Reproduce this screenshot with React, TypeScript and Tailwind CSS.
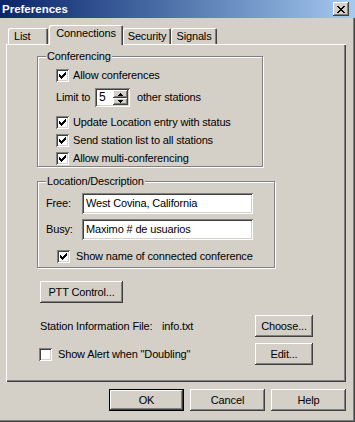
import React from 'react';

const raised =
  'shadow-[inset_-1px_-1px_#404040,inset_1px_1px_#ffffff,inset_-2px_-2px_#808080,inset_2px_2px_#d4d0c8]';
const sunken =
  'shadow-[inset_1px_1px_#808080,inset_-1px_-1px_#ffffff,inset_2px_2px_#404040,inset_-2px_-2px_#d4d0c8]';

function CheckBox({ checked }: { checked?: boolean }) {
  return (
    <span className={`w-[13px] h-[13px] shrink-0 bg-white flex items-center justify-center ${sunken}`}>
      {checked && (
        <svg width="7" height="7" viewBox="0 0 7 7" shapeRendering="crispEdges">
          <path
            fill="#000"
            d="M0 2h1v3h-1zM1 3h1v3h-1zM2 4h1v3h-1zM3 3h1v3h-1zM4 2h1v3h-1zM5 1h1v3h-1zM6 0h1v3h-1z"
          />
        </svg>
      )}
    </span>
  );
}

function Check({ label, checked, gap = 'gap-[4px]' }: { label: string; checked?: boolean; gap?: string }) {
  return (
    <div className={`h-[13px] flex items-center ${gap}`}>
      <CheckBox checked={checked} />
      <span className="whitespace-nowrap">{label}</span>
    </div>
  );
}

function Button({ label, width, isDefault }: { label: string; width: string; isDefault?: boolean }) {
  return (
    <div
      className={`${width} h-[22px] flex items-center justify-center bg-[#d4d0c8] ${raised} ${
        isDefault ? 'border border-black' : ''
      }`}
    >
      {label}
    </div>
  );
}

function Tab({ label, width, selected, left }: { label: string; width: string; selected?: boolean; left?: boolean }) {
  return (
    <div
      className={`${width} flex items-center ${left ? 'justify-start pl-[6px]' : 'justify-center'} bg-[#d4d0c8] rounded-t-[2px] shadow-[inset_1px_1px_#ffffff,inset_-1px_0_#404040,inset_-2px_0_#808080] ${
        selected ? 'h-[20px] -mb-px relative z-10 pb-[3px]' : 'h-[16px]'
      }`}
    >
      {label}
    </div>
  );
}

function GroupBox({ title, className, children }: { title: string; className: string; children: React.ReactNode }) {
  return (
    <div
      className={`relative ml-[31px] border border-[#808080] shadow-[inset_1px_1px_#ffffff,1px_1px_#ffffff] flex flex-col ${className}`}
    >
      <span className="absolute left-[8px] top-[-7px] px-[1px] bg-[#d4d0c8] leading-[13px]">{title}</span>
      {children}
    </div>
  );
}

function TextField({ value }: { value: string }) {
  return (
    <div className={`w-[171px] h-[21px] bg-white flex items-center pl-[4px] ${sunken}`}>{value}</div>
  );
}

function SpinBox({ value }: { value: string }) {
  return (
    <div className={`w-[35px] h-[19px] bg-white flex p-[2px] ${sunken}`}>
      <span className="flex-1 pl-[2px] text-[12px] leading-[15px]">{value}</span>
      <div className="w-[15px] flex flex-col">
        <div className={`h-[8px] flex items-center justify-center bg-[#d4d0c8] ${raised}`}>
          <svg width="5" height="3" viewBox="0 0 5 3" shapeRendering="crispEdges">
            <path fill="#000" d="M2 0h1v1h-1zM1 1h3v1h-3zM0 2h5v1h-5z" />
          </svg>
        </div>
        <div className={`h-[7px] flex items-center justify-center bg-[#d4d0c8] ${raised}`}>
          <svg width="5" height="3" viewBox="0 0 5 3" shapeRendering="crispEdges">
            <path fill="#000" d="M0 0h5v1h-5zM1 1h3v1h-3zM2 2h1v1h-1z" />
          </svg>
        </div>
      </div>
    </div>
  );
}

export default function App() {
  return (
    <div className="w-[355px] h-[422px] bg-[#d4d0c8] flex flex-col overflow-hidden font-['Liberation_Sans',Arial,sans-serif] text-[11px] leading-[13px] tracking-[-0.15px] text-black shadow-[inset_-1px_-1px_#404040,inset_-2px_-2px_#808080]">
      {/* Title bar */}
      <div className="h-[18px] shrink-0 flex items-center justify-between pl-[2px] pr-[6px] bg-linear-to-r from-[#0a246a] to-[#a6caf0]">
        <span className="text-white font-bold text-[11.5px] tracking-normal">Preferences</span>
        <div className={`w-[16px] h-[14px] flex items-center justify-center bg-[#d4d0c8] ${raised}`}>
          <svg width="8" height="7" viewBox="0 0 8 7" shapeRendering="crispEdges">
            <path
              fill="#000"
              d="M0 0h2v1h-2zM6 0h2v1h-2zM1 1h2v1h-2zM5 1h2v1h-2zM2 2h4v1h-4zM3 3h2v1h-2zM2 4h4v1h-4zM1 5h2v1h-2zM5 5h2v1h-2zM0 6h2v1h-2zM6 6h2v1h-2z"
            />
          </svg>
        </div>
      </div>

      {/* Tabs */}
      <div className="h-[26px] shrink-0 flex items-end pl-[8px]">
        <Tab label="List" width="w-[40px]" left />
        <div className="ml-[1px]">
          <Tab label="Connections" width="w-[74px]" selected />
        </div>
        <Tab label="Security" width="w-[48px]" />
        <Tab label="Signals" width="w-[46px]" />
      </div>

      {/* Tab panel */}
      <div className="ml-[6px] w-[340px] h-[338px] shrink-0 flex flex-col pt-[12px] shadow-[inset_1px_1px_#ffffff,inset_-1px_-1px_#404040,inset_-2px_-2px_#808080]">
        <GroupBox title="Conferencing" className="w-[226px] h-[111px] pl-[18px]">
          <div className="mt-[12px]">
            <Check label="Allow conferences" checked />
          </div>
          <div className="mt-[6px] h-[19px] flex items-center">
            <span className="w-[39px] whitespace-nowrap">Limit to</span>
            <SpinBox value="5" />
            <span className="ml-[7px] whitespace-nowrap">other stations</span>
          </div>
          <div className="mt-[9px]">
            <Check label="Update Location entry with status" checked />
          </div>
          <div className="mt-[5px]">
            <Check label="Send station list to all stations" checked />
          </div>
          <div className="mt-[5px]">
            <Check label="Allow multi-conferencing" checked />
          </div>
        </GroupBox>

        <div className="mt-[14px]">
          <GroupBox title="Location/Description" className="w-[238px] h-[87px]">
            <div className="mt-[11px] h-[21px] flex items-center pl-[8px]">
              <span className="w-[36px]">Free:</span>
              <TextField value="West Covina, California" />
            </div>
            <div className="mt-[5px] h-[21px] flex items-center pl-[8px]">
              <span className="w-[36px]">Busy:</span>
              <TextField value="Maximo # de usuarios" />
            </div>
            <div className="mt-[10px] pl-[19px]">
              <Check label="Show name of connected conference" checked gap="gap-[6px]" />
            </div>
          </GroupBox>
        </div>

        <div className="mt-[13px] ml-[34px]">
          <Button label="PTT Control..." width="w-[83px]" />
        </div>

        <div className="mt-[12px] h-[22px] flex items-center justify-between pl-[34px] pr-[33px]">
          <div className="flex items-center">
            <span className="w-[122px] whitespace-nowrap">Station Information File:</span>
            <span>info.txt</span>
          </div>
          <Button label="Choose..." width="w-[58px]" />
        </div>

        <div className="mt-[6px] h-[22px] flex items-center justify-between pl-[33px] pr-[33px]">
          <Check label={'Show Alert when "Doubling"'} gap="gap-[6px]" />
          <Button label="Edit..." width="w-[58px]" />
        </div>
      </div>

      {/* Dialog buttons */}
      <div className="mt-[7px] flex justify-end gap-[6px] pr-[9px]">
        <Button label="OK" width="w-[75px]" isDefault />
        <Button label="Cancel" width="w-[75px]" />
        <Button label="Help" width="w-[75px]" />
      </div>
    </div>
  );
}
